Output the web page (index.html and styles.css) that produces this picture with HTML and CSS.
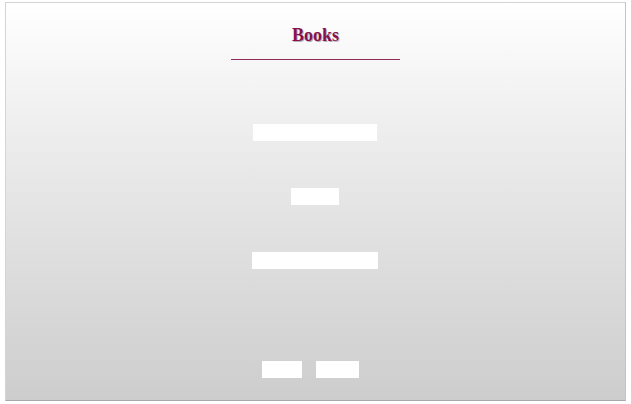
FILE: index.html
```html
<!DOCTYPE html>
<html lang="en">
<head>
    <meta charset="UTF-8">
    <meta name="viewport" content="width=device-width, initial-scale=1.0">
    <title>Books</title>
    <link rel="stylesheet" href="styles.css">
</head>
<body>
    <div class="container">
        <h1>Books</h1>
        <div class="divider"></div>
        <form class="book-form">
            <input class="field field-title" type="text">
            <input class="field field-year" type="text">
            <input class="field field-author" type="text">
            <div class="button-group">
                <button type="button" class="btn btn-save"></button>
                <button type="button" class="btn btn-reset"></button>
            </div>
        </form>
    </div>
</body>
</html>
```

FILE: styles.css
```css
html, body {
    height: 100%;
}
body {
    margin: 0;
    padding: 2px 5px 3px;
    box-sizing: border-box;
    background: #fff;
    font-family: 'Liberation Serif', 'Times New Roman', serif;
}
.container {
    height: 100%;
    box-sizing: border-box;
    padding-top: 22px;
    border: 1px solid #d4d4d4;
    border-bottom-color: #a8a8a8;
    border-right-color: #c4c4c4;
    background: linear-gradient(180deg, #ffffff 0%, #ececec 35%, #cdcdcd 100%);
    display: flex;
    flex-direction: column;
    align-items: center;
}
h1 {
    margin: 0;
    font-size: 18px;
    line-height: 20px;
    font-weight: bold;
    color: #8a1150;
    text-shadow: 1px 1px 0 rgba(0, 0, 0, 0.3);
}
.divider {
    width: 169px;
    height: 1px;
    margin-top: 14px;
    background: #8f2a5c;
}
.book-form {
    display: flex;
    flex-direction: column;
    align-items: center;
    margin: 64px 2px 0 0;
}
.field {
    display: block;
    height: 17px;
    padding: 0;
    border: none;
    background: #fff;
    box-sizing: border-box;
}
.field-title {
    width: 124px;
}
.field-year {
    width: 48px;
    margin-top: 47px;
}
.field-author {
    width: 126px;
    margin-top: 47px;
}
.button-group {
    display: flex;
    gap: 14px;
    margin-top: 92px;
    margin-right: 8px;
}
.btn {
    height: 17px;
    padding: 0;
    border: none;
    background: #fff;
}
.btn-save {
    width: 40px;
}
.btn-reset {
    width: 43px;
}
```
